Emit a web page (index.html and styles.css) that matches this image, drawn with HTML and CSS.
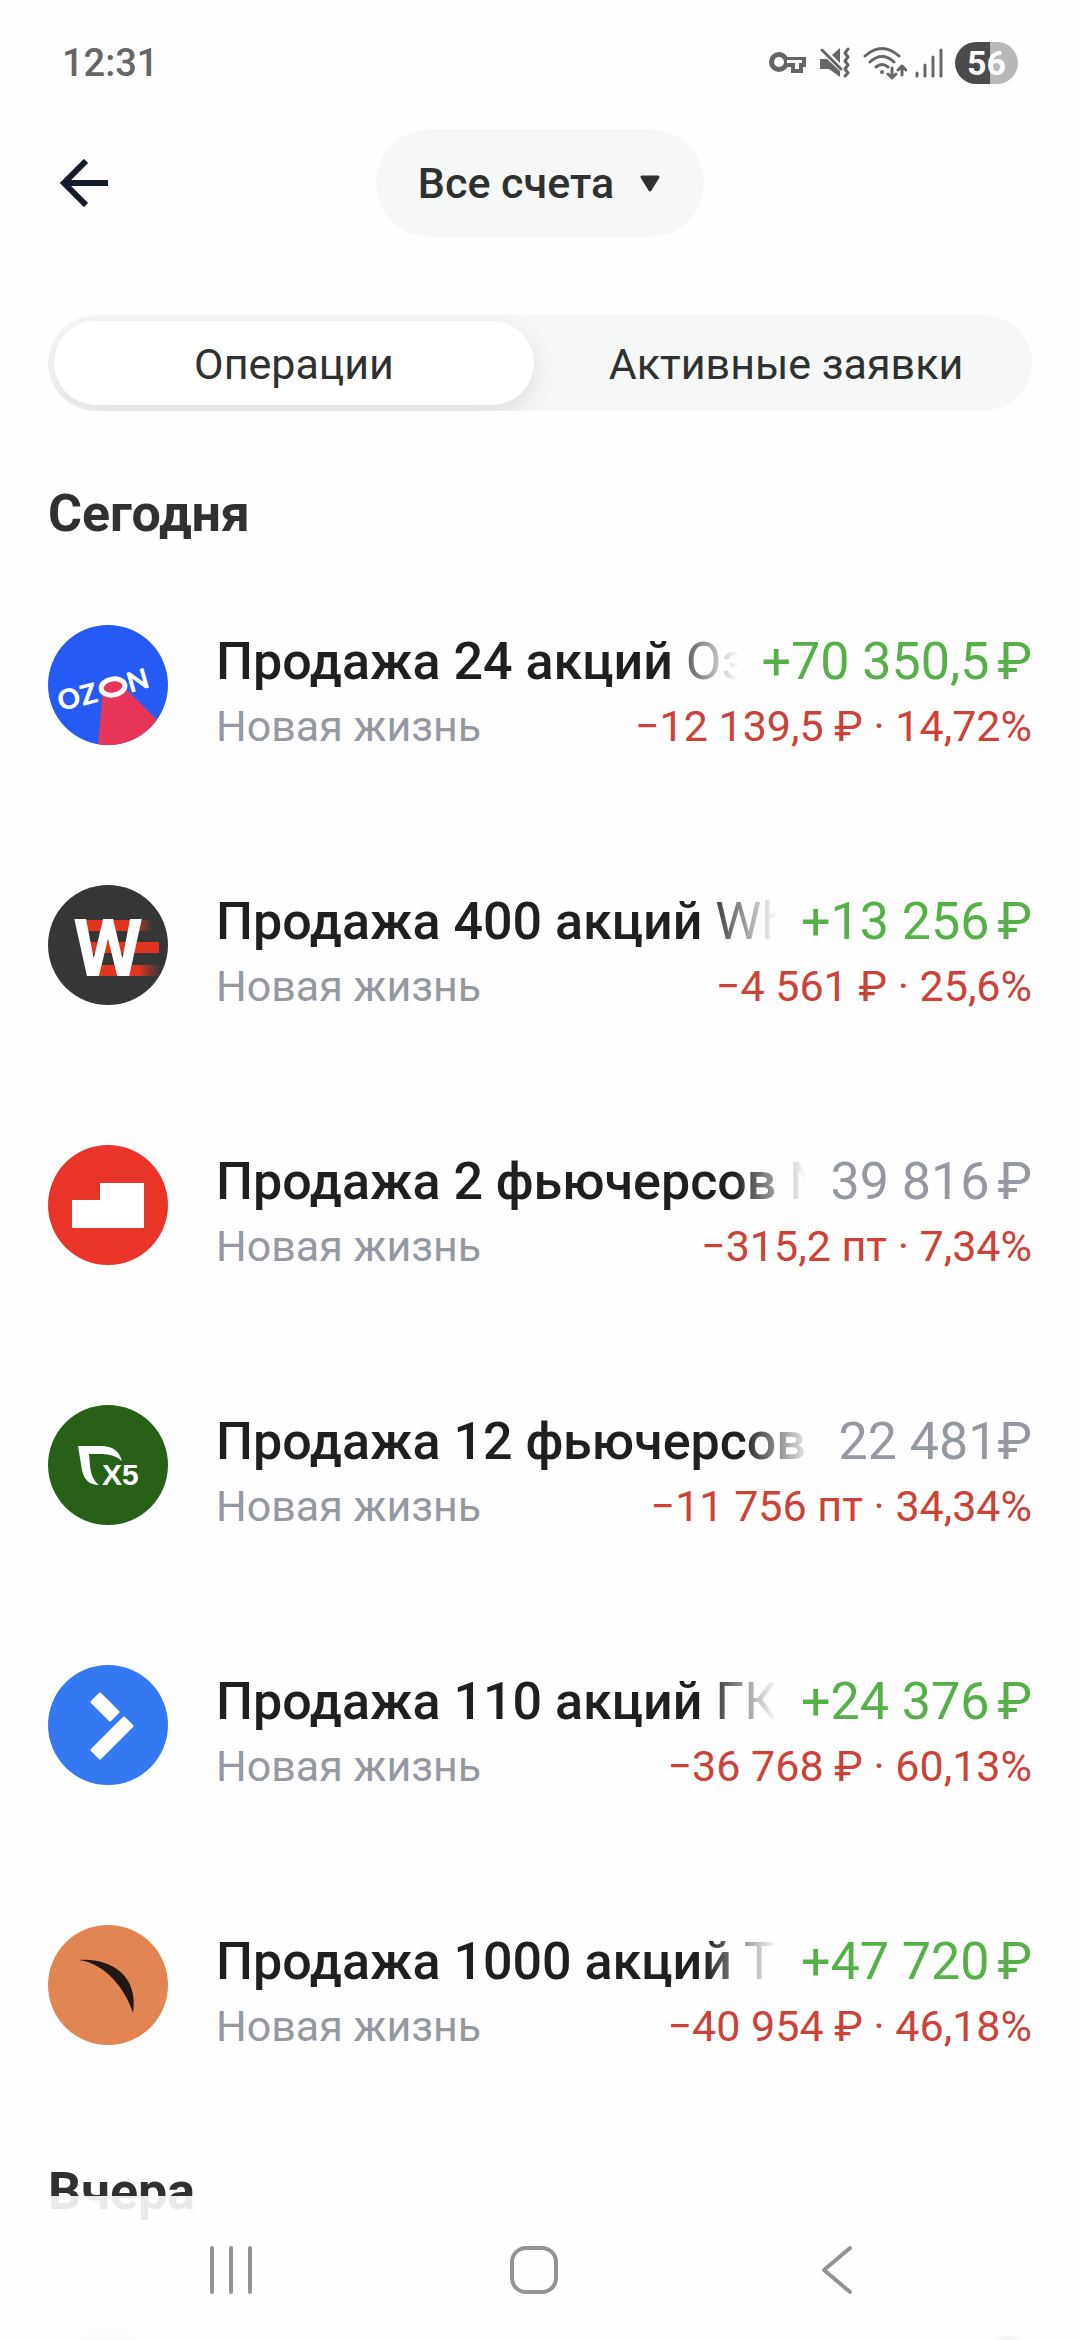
FILE: index.html
```html
<!DOCTYPE html>
<html lang="ru">
<head>
    <meta charset="UTF-8">
    <meta name="viewport" content="width=device-width, initial-scale=1.0">
    <title>Операции</title>
    <link rel="stylesheet" href="styles.css">
</head>
<body>
<div class="app">

    <div class="status-bar">
        <span class="time">12:31</span>
        <div class="status-icons">
            <svg width="38" height="22" viewBox="0 0 38 22" aria-hidden="true">
                <path d="M10 5H37V15H34V21H22V15H10Z" fill="#666"/>
                <circle cx="10" cy="10" r="10" fill="#666"/>
                <circle cx="10" cy="10" r="5" fill="#fefefe"/>
                <path d="M18 8H33V11H30V17H26V11H18Z" fill="#fefefe"/>
            </svg>
            <svg width="32" height="32" viewBox="0 0 32 32" aria-hidden="true">
                <path d="M1 12H8L21 24V30L10 22H1ZM13 8L21 1V16Z" fill="#666"/>
                <path d="M3 3L22 22" stroke="#666" stroke-width="3" stroke-linecap="round"/>
                <path d="M29 2L26 6L29 10L26 14L29 18L26 22L29 26L26 29" fill="none" stroke="#666" stroke-width="3" stroke-linecap="round" stroke-linejoin="round"/>
            </svg>
            <svg class="wifi" width="44" height="34" viewBox="0 0 44 34" aria-hidden="true">
                <g fill="none" stroke="#666" stroke-width="3" stroke-linecap="round" stroke-linejoin="round">
                    <path d="M2 10Q19 -5 36 10M7 16Q19 5 31 16M13 21Q19 16 25 21"/>
                    <path d="M29 22V32M25 28L29 32L33 28M39 29V20M35 24L39 20L43 24"/>
                </g>
                <circle cx="19" cy="26" r="2" fill="#666"/>
            </svg>
            <svg width="28" height="30" viewBox="0 0 28 30" aria-hidden="true">
                <path d="M2 25V28M10 17V28M18 9V28M26 2V28" stroke="#666" stroke-width="3" stroke-linecap="round"/>
            </svg>
            <span class="battery">56</span>
        </div>
    </div>

    <header class="header">
        <button class="back" type="button" aria-label="Назад">
            <svg width="48" height="48" viewBox="0 0 48 48" aria-hidden="true">
                <path d="M26 2L4 24L26 46M4 24H48" fill="none" stroke="#151b2b" stroke-width="6"/>
            </svg>
        </button>
        <button class="account" type="button">
            Все счета
            <svg width="20" height="18" viewBox="0 0 20 18" aria-hidden="true">
                <path d="M2 3H18L10 16Z" fill="#2f3130" stroke="#2f3130" stroke-width="3" stroke-linejoin="round"/>
            </svg>
        </button>
    </header>

    <div class="tabs" role="tablist">
        <button class="tab active" type="button" role="tab" aria-selected="true">Операции</button>
        <button class="tab" type="button" role="tab" aria-selected="false">Активные заявки</button>
    </div>

    <main class="feed">
        <h2 class="day">Сегодня</h2>
        <ul class="operations">
            <li class="operation">
                <svg class="logo" viewBox="0 0 120 120" aria-hidden="true">
                    <clipPath id="round"><circle cx="60" cy="60" r="60"/></clipPath>
                    <g clip-path="url(#round)">
                        <rect width="120" height="120" fill="#255af4"/>
                        <path d="M55 64L50 120H120V106L78 64Z" fill="#e63559"/>
                        <ellipse cx="65" cy="62" rx="12" ry="8" fill="#e63559" stroke="#fff" stroke-width="5" transform="rotate(-10 65 62)"/>
                        <text class="ozon" x="12" y="86" transform="rotate(-13 12 86)">O</text>
                        <text class="ozon" x="35" y="81" transform="rotate(-15 35 81)">Z</text>
                        <text class="ozon" x="82" y="68" transform="rotate(-16 82 68)">N</text>
                    </g>
                </svg>
                <div class="info">
                    <div class="line main-line">
                        <span class="title"><b>Продажа 24 акций</b> Оз</span>
                        <span class="sum plus">+70 350,5<span class="currency">₽</span></span>
                    </div>
                    <div class="line sub-line">
                        <span class="portfolio">Новая жизнь</span>
                        <span class="loss">−12 139,5 ₽ · 14,72%</span>
                    </div>
                </div>
            </li>
            <li class="operation">
                <svg class="logo" viewBox="0 0 120 120" aria-hidden="true">
                    <defs>
                        <linearGradient id="tail">
                            <stop offset="0.7" stop-color="#df3520"/>
                            <stop offset="1" stop-color="#df3520" stop-opacity="0"/>
                        </linearGradient>
                    </defs>
                    <circle cx="60" cy="60" r="60" fill="#363636"/>
                    <rect x="34" y="35" width="70" height="11" fill="url(#tail)"/>
                    <rect x="38" y="57" width="73" height="11" fill="#df3520"/>
                    <rect x="40" y="80" width="72" height="11" fill="url(#tail)"/>
                    <text class="whoosh" x="60" y="91" text-anchor="middle">W</text>
                </svg>
                <div class="info">
                    <div class="line main-line">
                        <span class="title"><b>Продажа 400 акций</b> Wh</span>
                        <span class="sum plus">+13 256<span class="currency">₽</span></span>
                    </div>
                    <div class="line sub-line">
                        <span class="portfolio">Новая жизнь</span>
                        <span class="loss">−4 561 ₽ · 25,6%</span>
                    </div>
                </div>
            </li>
            <li class="operation">
                <svg class="logo" viewBox="0 0 120 120" aria-hidden="true">
                    <circle cx="60" cy="60" r="60" fill="#e93529"/>
                    <path d="M24 55H52V38H96V83H24Z" fill="#fff"/>
                </svg>
                <div class="info">
                    <div class="line main-line">
                        <span class="title"><b>Продажа 2 фьючерсов</b> N</span>
                        <span class="sum">39 816<span class="currency">₽</span></span>
                    </div>
                    <div class="line sub-line">
                        <span class="portfolio">Новая жизнь</span>
                        <span class="loss">−315,2 пт · 7,34%</span>
                    </div>
                </div>
            </li>
            <li class="operation">
                <svg class="logo" viewBox="0 0 120 120" aria-hidden="true">
                    <circle cx="60" cy="60" r="60" fill="#276118"/>
                    <path d="M30 41H53Q70 41 74 56Q66 49 54 49H41L42 61Q43 74 51 80Q37 80 34 65Z" fill="#fff"/>
                    <text class="x5" x="54" y="80">X5</text>
                </svg>
                <div class="info">
                    <div class="line main-line">
                        <span class="title"><b>Продажа 12 фьючерсов</b></span>
                        <span class="sum">22 481₽</span>
                    </div>
                    <div class="line sub-line">
                        <span class="portfolio">Новая жизнь</span>
                        <span class="loss">−11 756 пт · 34,34%</span>
                    </div>
                </div>
            </li>
            <li class="operation">
                <svg class="logo" viewBox="0 0 120 120" aria-hidden="true">
                    <circle cx="60" cy="60" r="60" fill="#3579f2"/>
                    <g fill="#fff" stroke="#fff" stroke-width="3" stroke-linejoin="round">
                        <path d="M52 29L70 47L62 55L44 37Z"/>
                        <path d="M76 53L84 61L52 93L44 85Z"/>
                    </g>
                </svg>
                <div class="info">
                    <div class="line main-line">
                        <span class="title"><b>Продажа 110 акций</b> ГК</span>
                        <span class="sum plus">+24 376<span class="currency">₽</span></span>
                    </div>
                    <div class="line sub-line">
                        <span class="portfolio">Новая жизнь</span>
                        <span class="loss">−36 768 ₽ · 60,13%</span>
                    </div>
                </div>
            </li>
            <li class="operation">
                <svg class="logo" viewBox="0 0 120 120" aria-hidden="true">
                    <circle cx="60" cy="60" r="60" fill="#e18553"/>
                    <path d="M31 35C62 33 91 50 85 88C79 68 60 39 31 35Z" fill="#211714"/>
                </svg>
                <div class="info">
                    <div class="line main-line">
                        <span class="title"><b>Продажа 1000 акций</b> Т</span>
                        <span class="sum plus">+47 720<span class="currency">₽</span></span>
                    </div>
                    <div class="line sub-line">
                        <span class="portfolio">Новая жизнь</span>
                        <span class="loss">−40 954 ₽ · 46,18%</span>
                    </div>
                </div>
            </li>
        </ul>
        <h2 class="day">Вчера</h2>
        <div class="summary">
            <span class="summary-icon"></span>
            <span class="summary-mark"></span>
        </div>
    </main>

    <nav class="system-nav" aria-label="Системная навигация">
        <button type="button" aria-label="Недавние">
            <svg width="48" height="52" viewBox="0 0 48 52" aria-hidden="true">
                <path d="M5 4V48M24 4V48M43 4V48" stroke="#939393" stroke-width="4" stroke-linecap="round"/>
            </svg>
        </button>
        <button type="button" aria-label="Домой">
            <svg width="48" height="52" viewBox="0 0 48 52" aria-hidden="true">
                <rect x="2" y="4" width="44" height="44" rx="14" fill="none" stroke="#939393" stroke-width="4"/>
            </svg>
        </button>
        <button type="button" aria-label="Назад">
            <svg width="48" height="52" viewBox="0 0 48 52" aria-hidden="true">
                <path d="M37 4L11 26L37 48" fill="none" stroke="#939393" stroke-width="4" stroke-linecap="round" stroke-linejoin="round"/>
            </svg>
        </button>
    </nav>

</div>
</body>
</html>
```
FILE: styles.css
```css
* {
    box-sizing: border-box;
}
body {
    margin: 0;
    background-color: #fefefe;
    color: #2f3130;
    font-family: Roboto, "Noto Sans", sans-serif;
}
button {
    border: none;
    padding: 0;
    background: none;
    color: inherit;
    font-family: inherit;
}
svg {
    display: block;
    flex-shrink: 0;
}
.app {
    display: flex;
    flex-direction: column;
    height: 100vh;
    overflow: hidden;
}

/* status bar */
.status-bar {
    display: flex;
    flex-shrink: 0;
    justify-content: space-between;
    align-items: center;
    height: 126px;
    padding: 0 62px;
    color: #666;
}
.time {
    font-size: 38px;
    font-weight: 500;
}
.status-icons {
    display: flex;
    align-items: center;
    gap: 12px;
}
.wifi {
    margin-right: -4px;
}
.battery {
    width: 63px;
    height: 42px;
    border-radius: 21px;
    background: linear-gradient(to right, #4b4b4b 55%, #b8b8b8 55%);
    color: #fff;
    font-size: 34px;
    font-weight: bold;
    line-height: 42px;
    text-align: center;
}

/* header */
.header {
    display: grid;
    grid-template-columns: 1fr auto 1fr;
    flex-shrink: 0;
    align-items: center;
    height: 114px;
    padding: 0 48px;
}
.back {
    justify-self: start;
    padding: 12px;
}
.account {
    display: flex;
    align-items: center;
    gap: 26px;
    height: 108px;
    padding: 0 44px 0 42px;
    border-radius: 54px;
    background-color: #f6f8f7;
    font-size: 43px;
    font-weight: 500;
}

/* tabs */
.tabs {
    display: grid;
    grid-template-columns: 1fr 1fr;
    flex-shrink: 0;
    gap: 12px;
    height: 96px;
    margin: 75px 48px 0;
    padding: 6px;
    overflow: hidden;
    border-radius: 48px;
    background-color: #f6f8f7;
}
.tab {
    padding-top: 2px;
    border-radius: 42px;
    font-size: 43px;
}
.tab.active {
    background-color: #fff;
    box-shadow: 0 8px 24px rgba(0, 0, 0, 0.1);
}

/* feed */
.feed {
    flex: 1;
    min-height: 0;
    padding: 71px 48px 0;
    overflow: hidden;
}
.day {
    margin: 0;
    font-size: 52px;
    font-weight: bold;
    line-height: 64px;
}
.operations {
    display: flex;
    flex-direction: column;
    gap: 132px;
    margin: 79px 0 107px;
    padding: 0;
    list-style: none;
}
.operation {
    display: flex;
    gap: 48px;
}
.logo {
    width: 120px;
    height: 120px;
}
.ozon {
    fill: #fff;
    font-family: Lato, sans-serif;
    font-size: 28px;
    font-weight: 900;
}
.whoosh {
    fill: #fff;
    font-size: 80px;
    font-weight: bold;
}
.x5 {
    fill: #fff;
    font-family: "Liberation Sans", sans-serif;
    font-size: 30px;
    font-weight: bold;
}
.info {
    flex: 1;
    min-width: 0;
}
.line {
    display: flex;
    justify-content: space-between;
    white-space: nowrap;
}
.main-line {
    gap: 24px;
    font-size: 52px;
    line-height: 74px;
}
.sub-line {
    font-size: 43px;
    line-height: 54px;
}
.title {
    flex: 1;
    overflow: hidden;
    color: #1f1f1f;
    -webkit-mask-image: linear-gradient(to left, transparent, #000 72px);
    mask-image: linear-gradient(to left, transparent, #000 72px);
}
.title b {
    font-weight: 500;
}
.sum,
.portfolio {
    color: #9498a0;
}
.plus {
    color: #55b048;
}
.currency {
    margin-left: 8px;
}
.loss {
    color: #cb4239;
}

/* day summary */
.summary {
    display: flex;
    justify-content: space-between;
    margin-top: 104px;
}
.summary-icon {
    width: 120px;
    height: 120px;
    border-radius: 50%;
    background-color: #e4e4e4;
}
.summary-mark {
    width: 36px;
    height: 36px;
    margin: 8px 6px 0 0;
    border-radius: 50%;
    background-color: #b0808a;
}

/* system navigation lies over the feed */
.system-nav {
    position: fixed;
    right: 0;
    bottom: 0;
    left: 0;
    display: flex;
    justify-content: space-around;
    height: 144px;
    padding: 48px 92px 0 80px;
    background-color: rgba(254, 254, 254, 0.9);
}
.system-nav button {
    height: 52px;
}
```
